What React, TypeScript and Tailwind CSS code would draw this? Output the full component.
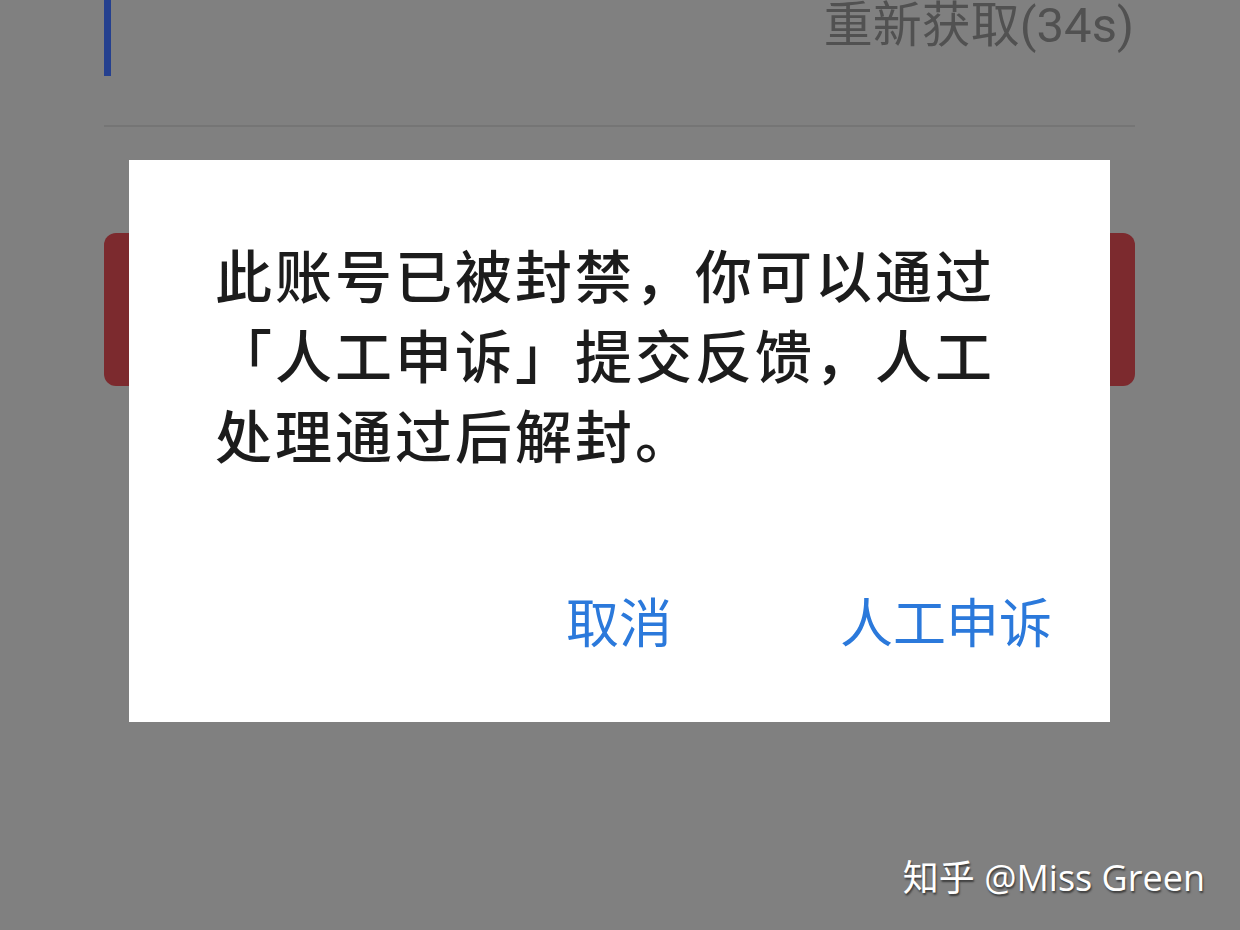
export default function App() {
  const cjk = { fontFamily: '"Noto Sans CJK SC", "Noto Sans", sans-serif' };

  return (
    <div className="relative w-[1240px] h-[930px] overflow-hidden bg-[#808080]" style={cjk}>
      {/* page behind the dialog */}
      <div className="flex flex-col pl-[104px] pr-[105px]">
        <div className="flex justify-between items-start h-[76px]">
          <div className="w-[7px] h-[76px] bg-[#25408f]" />
          <div
            className="text-[49px] leading-[52px] text-[#515151] mr-[1px]"
            style={{ fontFamily: 'Roboto, "Noto Sans CJK SC", sans-serif' }}
          >
            重新获取(34s)
          </div>
        </div>
        <div className="mt-[49px] h-[2px] bg-[#757575]" />
        <div className="mt-[106px] h-[153px] rounded-[12px] bg-[#7c2a2e]" />
      </div>

      {/* dialog */}
      <div className="absolute left-[129px] top-[160px] w-[981px] h-[562px] bg-white flex flex-col">
        <div className="pl-[86px] pt-[73px] pr-[40px] text-[57px] leading-[80px] tracking-[3px] font-medium text-[#1c1c1c]">
          <div>此账号已被封禁，你可以通过</div>
          <div>「人工申诉」提交反馈，人工</div>
          <div>处理通过后解封。</div>
        </div>
        <div className="mt-auto mb-[75px] flex justify-end items-center gap-[168px] pr-[58px] text-[53px] leading-none text-[#2b79db]">
          <button>取消</button>
          <button>人工申诉</button>
        </div>
      </div>

      {/* watermark */}
      <div
        className="absolute right-[35px] top-[853px] text-[36px] leading-[50px] text-white [text-shadow:1px_2px_2px_rgba(0,0,0,0.55)]"
        style={{ fontFamily: '"Open Sans", "Noto Sans CJK SC", sans-serif' }}
      >
        知乎 @Miss Green
      </div>
    </div>
  );
}
